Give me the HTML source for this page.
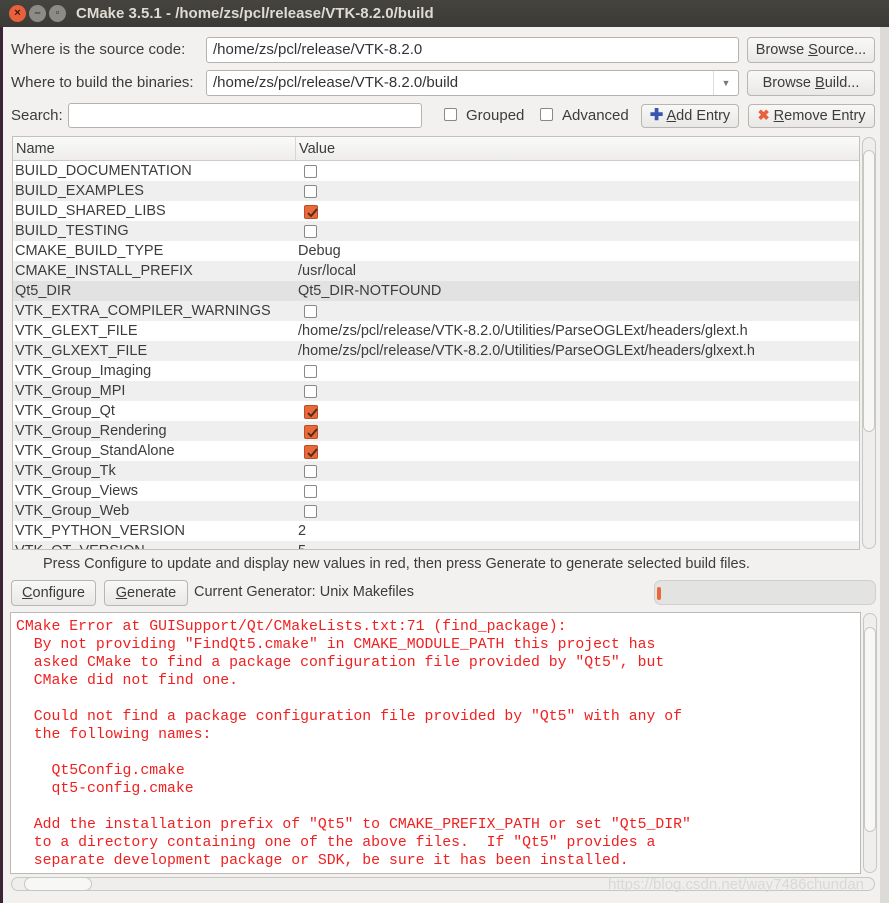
<!DOCTYPE html>
<html><head><meta charset="utf-8"><style>
*{box-sizing:border-box;margin:0;padding:0}
body{width:889px;height:903px;background:#f2f1f0;font-family:"Liberation Sans",sans-serif;font-size:14px;color:#3c3c3c;position:relative;overflow:hidden}
.a{position:absolute}
.tb{left:0;top:0;width:889px;height:27px;background:linear-gradient(#45443f,#3b3a36);color:#dfdbd2;font-weight:bold;font-size:15px}
.wb{width:17px;height:17px;border-radius:50%;top:5px;font-size:11px;text-align:center;line-height:17px;color:#3c3b37}
.inp{background:#fff;border:1px solid #b6b3ad;border-radius:3px;height:26px;padding-left:6px;line-height:24px;font-size:15px;color:#333}
.btn{border:1px solid #b9b6b0;border-radius:4px;background:linear-gradient(#f8f8f7,#e9e8e6);height:26px;line-height:24px;text-align:center;font-size:14.5px;color:#3c3c3c}
.cb{width:13px;height:13px;border:1px solid #8a8884;border-radius:2px;background:#fff}
.ck{width:14px;height:14px;border-radius:2px;background:#e9693a;border:1px solid #b84f28}
.ck svg{position:absolute;left:1px;top:1px}
.row{left:13px;width:846px;height:20px;line-height:21px;font-size:14.5px}
.row span{position:absolute;left:2px}
.row b{font-weight:normal;position:absolute;left:285px}
.row i{position:absolute;left:291px;top:4px}
.log{font-family:"Liberation Mono",monospace;font-size:14.8px;color:#f02020;white-space:pre;line-height:18px}
.sb{background:#efeeed;border:1px solid #c9c7c3;border-radius:7px}
</style></head><body>
<div class="a tb"><span class="a" style="left:76px;top:5px">CMake 3.5.1 - /home/zs/pcl/release/VTK-8.2.0/build</span>
<div class="a wb" style="left:9px;background:#e8603c;color:#3a1a10">×</div>
<div class="a wb" style="left:29px;background:#8c8b86">–</div>
<div class="a wb" style="left:49px;background:#8c8b86">▫</div></div>
<div class="a" style="left:0;top:27px;width:3px;height:876px;background:#3a2436"></div>
<div class="a" style="left:880px;top:27px;width:9px;height:876px;background:#dcdbd8"></div>
<div class="a" style="left:11px;top:41px;font-size:15px">Where is the source code:</div>
<div class="a inp" style="left:206px;top:37px;width:533px">/home/zs/pcl/release/VTK-8.2.0</div>
<div class="a btn" style="left:747px;top:37px;width:128px">Browse <u>S</u>ource...</div>
<div class="a" style="left:11px;top:74px;font-size:15px">Where to build the binaries:</div>
<div class="a inp" style="left:206px;top:70px;width:533px">/home/zs/pcl/release/VTK-8.2.0/build<span class="a" style="right:0;top:0;width:25px;height:24px;border-left:1px solid #ddd;text-align:center;font-size:9px;color:#777">▼</span></div>
<div class="a btn" style="left:747px;top:70px;width:128px">Browse <u>B</u>uild...</div>
<div class="a" style="left:11px;top:107px;font-size:15px">Search:</div>
<div class="a inp" style="left:68px;top:103px;width:354px;height:25px"></div>
<div class="a cb" style="left:444px;top:108px"></div><div class="a" style="left:466px;top:107px;font-size:15px">Grouped</div>
<div class="a cb" style="left:540px;top:108px"></div><div class="a" style="left:562px;top:107px;font-size:15px">Advanced</div>
<div class="a btn" style="left:641px;top:104px;width:98px;height:24px;line-height:22px"><span style="color:#3a55b0;font-weight:bold;font-size:16px">✚</span> <u>A</u>dd Entry</div>
<div class="a btn" style="left:748px;top:104px;width:127px;height:24px;line-height:22px"><span style="color:#e8603c;font-weight:bold">✖</span> <u>R</u>emove Entry</div>
<div class="a" style="left:12px;top:136px;width:848px;height:414px;background:#fff;border:1px solid #c3c1bd"></div>
<div class="a" style="left:13px;top:137px;width:846px;height:24px;background:linear-gradient(#fafafa,#eeedec);border-bottom:1px solid #cfcdca;font-size:14.5px;line-height:24px"><span class="a" style="left:3px">Name</span><span class="a" style="left:282px;height:23px;border-left:1px solid #d8d6d3;padding-left:3px">Value</span></div>
<div class="a" style="left:13px;top:161px;width:846px;height:388px;overflow:hidden">
<div style="position:relative">
<div class="a row" style="left:0;top:0"><span>BUILD_DOCUMENTATION</span><i class="cb"></i></div>
<div class="a row" style="left:0;top:20px;background:#efefef"><span>BUILD_EXAMPLES</span><i class="cb"></i></div>
<div class="a row" style="left:0;top:40px"><span>BUILD_SHARED_LIBS</span><i class="ck"><svg width="12" height="12"><path d="M2 6l3 3 6-7" stroke="#4a2a1a" stroke-width="1.8" fill="none"/></svg></i></div>
<div class="a row" style="left:0;top:60px;background:#efefef"><span>BUILD_TESTING</span><i class="cb"></i></div>
<div class="a row" style="left:0;top:80px"><span>CMAKE_BUILD_TYPE</span><b>Debug</b></div>
<div class="a row" style="left:0;top:100px;background:#efefef"><span>CMAKE_INSTALL_PREFIX</span><b>/usr/local</b></div>
<div class="a row" style="left:0;top:120px;background:#e2e2e2"><span>Qt5_DIR</span><b>Qt5_DIR-NOTFOUND</b></div>
<div class="a row" style="left:0;top:140px;background:#efefef"><span>VTK_EXTRA_COMPILER_WARNINGS</span><i class="cb"></i></div>
<div class="a row" style="left:0;top:160px"><span>VTK_GLEXT_FILE</span><b>/home/zs/pcl/release/VTK-8.2.0/Utilities/ParseOGLExt/headers/glext.h</b></div>
<div class="a row" style="left:0;top:180px;background:#efefef"><span>VTK_GLXEXT_FILE</span><b>/home/zs/pcl/release/VTK-8.2.0/Utilities/ParseOGLExt/headers/glxext.h</b></div>
<div class="a row" style="left:0;top:200px"><span>VTK_Group_Imaging</span><i class="cb"></i></div>
<div class="a row" style="left:0;top:220px;background:#efefef"><span>VTK_Group_MPI</span><i class="cb"></i></div>
<div class="a row" style="left:0;top:240px"><span>VTK_Group_Qt</span><i class="ck"><svg width="12" height="12"><path d="M2 6l3 3 6-7" stroke="#4a2a1a" stroke-width="1.8" fill="none"/></svg></i></div>
<div class="a row" style="left:0;top:260px;background:#efefef"><span>VTK_Group_Rendering</span><i class="ck"><svg width="12" height="12"><path d="M2 6l3 3 6-7" stroke="#4a2a1a" stroke-width="1.8" fill="none"/></svg></i></div>
<div class="a row" style="left:0;top:280px"><span>VTK_Group_StandAlone</span><i class="ck"><svg width="12" height="12"><path d="M2 6l3 3 6-7" stroke="#4a2a1a" stroke-width="1.8" fill="none"/></svg></i></div>
<div class="a row" style="left:0;top:300px;background:#efefef"><span>VTK_Group_Tk</span><i class="cb"></i></div>
<div class="a row" style="left:0;top:320px"><span>VTK_Group_Views</span><i class="cb"></i></div>
<div class="a row" style="left:0;top:340px;background:#efefef"><span>VTK_Group_Web</span><i class="cb"></i></div>
<div class="a row" style="left:0;top:360px"><span>VTK_PYTHON_VERSION</span><b>2</b></div>
<div class="a row" style="left:0;top:380px;background:#efefef"><span>VTK_QT_VERSION</span><b>5</b></div>
</div></div>
<div class="a sb" style="left:862px;top:137px;width:14px;height:412px"></div>
<div class="a sb" style="left:863px;top:150px;width:12px;height:282px;background:#f7f7f6"></div>
<div class="a" style="left:43px;top:556px;font-size:14.5px">Press Configure to update and display new values in red, then press Generate to generate selected build files.</div>
<div class="a btn" style="left:11px;top:580px;width:85px"><u>C</u>onfigure</div>
<div class="a btn" style="left:104px;top:580px;width:84px"><u>G</u>enerate</div>
<div class="a" style="left:194px;top:584px;font-size:14.5px">Current Generator: Unix Makefiles</div>
<div class="a" style="left:654px;top:580px;width:222px;height:25px;background:#e3e3e2;border:1px solid #d0cfcd;border-radius:7px"><div class="a" style="left:2px;top:6px;width:4px;height:13px;background:#e9693a;border-radius:2px"></div></div>
<div class="a" style="left:10px;top:612px;width:851px;height:262px;background:#fff;border:1px solid #bcbab6;overflow:hidden">
<div class="a log" style="left:5px;top:5px">CMake Error at GUISupport/Qt/CMakeLists.txt:71 (find_package):
  By not providing "FindQt5.cmake" in CMAKE_MODULE_PATH this project has
  asked CMake to find a package configuration file provided by "Qt5", but
  CMake did not find one.

  Could not find a package configuration file provided by "Qt5" with any of
  the following names:

    Qt5Config.cmake
    qt5-config.cmake

  Add the installation prefix of "Qt5" to CMAKE_PREFIX_PATH or set "Qt5_DIR"
  to a directory containing one of the above files.  If "Qt5" provides a
  separate development package or SDK, be sure it has been installed.</div></div>
<div class="a sb" style="left:863px;top:613px;width:14px;height:260px"></div>
<div class="a sb" style="left:864px;top:627px;width:12px;height:205px;background:#f7f7f6"></div>
<div class="a sb" style="left:11px;top:877px;width:864px;height:14px"></div>
<div class="a sb" style="left:24px;top:877px;width:68px;height:14px;background:#f7f7f6"></div>
<div class="a" style="left:608px;top:876px;font-size:15px;color:#d8d8d8">https://blog.csdn.net/way7486chundan</div>
</body></html>
